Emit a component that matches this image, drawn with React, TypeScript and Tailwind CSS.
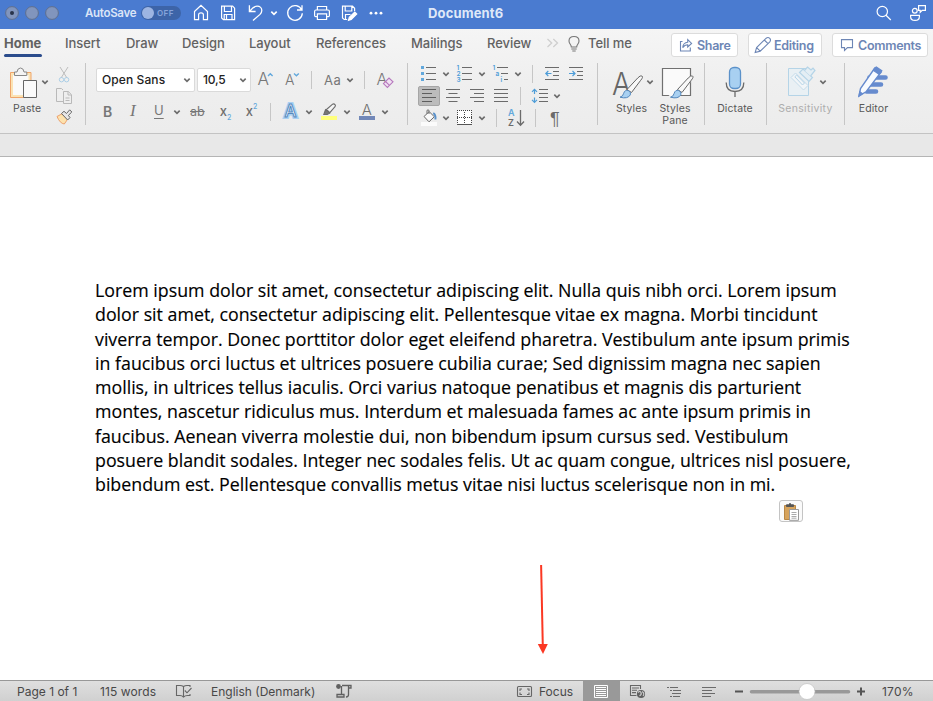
import type { ReactNode } from "react";

type PicProps = { box: string; className?: string; color?: string; width?: number; children: ReactNode };

/** Line drawing whose size is given by the last two numbers of its view box. */
function Pic({ box, className = "", color = "#6b6b6b", width = 1.2, children }: PicProps) {
  const [, , w, h] = box.split(" ");
  return (
    <svg
      viewBox={box}
      width={w}
      height={h}
      fill="none"
      stroke={color}
      strokeWidth={width}
      className={`block shrink-0 overflow-visible ${className}`}
    >
      {children}
    </svg>
  );
}

function Chevron({ className = "", color = "#6c6c6c" }: { className?: string; color?: string }) {
  return (
    <Pic box="0 0 8 8" className={className} color={color} width={1.6}>
      <path d="M1.3 2.6 4 5.4 6.7 2.6" />
    </Pic>
  );
}

function Divider({ className }: { className: string }) {
  return <div className={`w-px shrink-0 bg-[#c6c6c6] ${className}`} />;
}

const glyph = "font-['Inter',sans-serif]";

function TitleBar() {
  return (
    <header className="flex h-[29px] items-center bg-[#4a7bd0] pb-[3px] text-white">
      <Pic box="5 0 54 26" className="ml-[5px]" color="#5f6f8e" width={1}>
        <circle cx="12" cy="13" r="6.4" fill="#8195bd" />
        <circle cx="32" cy="13" r="6.4" fill="#8195bd" />
        <circle cx="52" cy="13" r="6.4" fill="#8195bd" />
        <circle cx="12" cy="13" r="2" fill="#28334a" stroke="none" />
      </Pic>
      <span className="mt-[2px] ml-[26px] w-[56px] text-[11.5px] font-semibold tracking-[-0.3px] text-[#dbe5f7]">AutoSave</span>
      <div className="flex h-[14px] w-[40px] items-center rounded-full bg-[#3d64a8]">
        <div className="ml-[1px] size-[12px] rounded-full bg-[#9db5e2]" />
        <span className="ml-[3px] text-[8px] font-semibold tracking-[0.4px] text-[#86a4dc]">OFF</span>
      </div>
      <Pic box="193 0 17 26" className="ml-[12px]" color="#fff" width={1.2}>
        <path d="M194.5 11.5 201 5.4 207.5 11.5V19.6H203.4V14.8Q203.4 12.8 201 12.8T198.6 14.8V19.6H194.5Z" />
      </Pic>
      <Pic box="220 0 17 26" className="ml-[10px]" color="#fff" width={1.2}>
        <path d="M221.6 6.2H232.6L234.6 8.2V19.7H223.4L221.6 18ZM224.4 6.5V11.5H231.5V6.5M224.2 19.5V14.5H232V19.5M226.5 15V19" />
      </Pic>
      <Pic box="247 0 17 26" className="ml-[10px]" color="#fff" width={1.3}>
        <path d="M249.4 5.3V11.5H255.6M249.8 11.2C252 8.2 254 6.2 257.2 6.2 260 6.2 261.8 8.2 261.8 10.5 261.8 12.2 261 13.3 260 14.4L253 20.6" />
      </Pic>
      <Chevron className="ml-[6px]" color="#fff" />
      <Pic box="286 0 18 26" className="ml-[8px]" color="#fff" width={1.3}>
        <path d="M302 5.2V10H297M301.6 9.8A7.3 7.3 0 1 0 302.3 13.2" />
      </Pic>
      <Pic box="313 0 18 26" className="ml-[9px]" color="#fff" width={1.2}>
        <path d="M317.4 10V6.5H326.6V10M317 16.7H315.7Q314.6 16.7 314.6 15.5V11.6Q314.6 10 316 10H328Q329.4 10 329.4 11.6V15.5Q329.4 16.7 328.3 16.7H327M317.4 13.8H326.6V19.5H317.4Z" />
      </Pic>
      <Pic box="340 0 18 26" className="ml-[9px]" color="#fff" width={1.2}>
        <path d="M347.2 19.5H344.2L342.5 18V6.2H352.5L354.6 8.2V11M345.2 6.5V11H351.8V6.5M345.5 19V14.5H350.5" />
        <path d="M348.5 20.3 349.3 17.4 354.8 12.2 356.7 14 351.2 19.4Z" fill="#fff" />
      </Pic>
      <Pic box="368 0 16 26" className="ml-[10px]" color="none">
        <g fill="#fff">
          <circle cx="371" cy="13.2" r="1.4" />
          <circle cx="376" cy="13.2" r="1.4" />
          <circle cx="381" cy="13.2" r="1.4" />
        </g>
      </Pic>
      <span className="mt-[2px] ml-[44px] text-[13px] font-bold tracking-[0.15px] text-[#dfe8f8]">Document6</span>
      <Pic box="875 0 17 26" className="ml-auto" color="#fff" width={1.2}>
        <circle cx="882.3" cy="11.5" r="5.2" />
        <path d="M886 15.3 890.8 20" />
      </Pic>
      <Pic box="909 0 18 26" className="mr-[6px] ml-[17px]" color="#fff" width={1.2}>
        <circle cx="914.8" cy="10.8" r="2.4" />
        <path d="M910.6 15.3H919.4V16.4Q919.4 20.4 915 20.4T910.6 16.4ZM918.6 5.6H925.4V10.4H922.2L920.2 12.3V10.4H918.6Z" />
      </Pic>
    </header>
  );
}

function Tabs() {
  return (
    <nav className="flex h-[33px] items-start pt-[6px] text-[13px] leading-[16px] font-medium tracking-[-0.05px] text-[#626262]">
      <div className="ml-[4px] w-[61px] font-bold tracking-[0px]">
        Home
        <div className="mt-[3px] h-[3px] w-[38px] rounded-full bg-[#2b4c8c]" />
      </div>
      <span className="w-[61px]">Insert</span>
      <span className="w-[56px]">Draw</span>
      <span className="w-[67px]">Design</span>
      <span className="w-[67px]">Layout</span>
      <span className="w-[95px]">References</span>
      <span className="w-[76px]">Mailings</span>
      <span className="w-[59px]">Review</span>
      <Pic box="546 35 14 16" color="#cfcfcf" width={1.3}>
        <path d="M547.5 39 551.7 43 547.5 47M553.3 39 557.5 43 553.3 47" />
      </Pic>
      <Pic box="567 35 14 18" className="ml-[7px]" width={1.1} color="#777">
        <path d="M571.3 47C571.3 44.5 569 44 569 41 569 38.2 571.2 36.5 574 36.5S579 38.2 579 41C579 44 576.7 44.5 576.7 47ZM571.3 49H576.7M572.3 51H575.7" />
      </Pic>
      <span className="ml-[7px] w-[83px]">Tell me</span>
      <div className="-mt-[2px] flex h-[24px] w-[67px] items-center rounded-[3px] border border-[#dcdcdc] bg-white text-[12.5px] font-semibold tracking-[-0.3px] text-[#6d86b5]">
        <Pic box="679 37 14 16" className="mr-[4px] ml-[7px]" color="#6d86b5" width={1.1}>
          <path d="M682.5 41.5H680.5V51H690.3V47.5M682.7 47.6C683 44 684.8 42.4 687.7 42.2V39.5L691.6 43.4 687.7 47V44.8C685.5 44.8 684 45.6 682.7 47.6Z" />
        </Pic>
        <span className="mt-px">Share</span>
      </div>
      <div className="-mt-[2px] ml-[10px] flex h-[24px] w-[74px] items-center rounded-[3px] border border-[#dcdcdc] bg-white text-[12.5px] font-semibold tracking-[-0.3px] text-[#6d86b5]">
        <Pic box="754 36 18 18" className="mr-[2px] ml-[5px]" color="#6d86b5" width={1.1}>
          <path d="M755.2 52.4 756.6 47.6 766.2 38.2Q768 36.8 769.8 38.3 771.2 40 769.8 41.9L760.2 51.2ZM756.6 47.6 760.2 51.2M764.3 40 768 43.6" />
        </Pic>
        <span className="mt-px">Editing</span>
      </div>
      <div className="-mt-[2px] ml-[10px] flex h-[24px] w-[96px] items-center rounded-[3px] border border-[#dcdcdc] bg-white text-[12.5px] font-semibold tracking-[-0.3px] text-[#6d86b5]">
        <Pic box="840 37 15 16" className="mr-[2px] ml-[7px]" color="#6d86b5" width={1.1}>
          <path d="M841.5 39.6H852.5V47.6H847.5L844.5 50.5V47.6H841.5Z" />
        </Pic>
        <span className="mt-px ml-px">Comments</span>
      </div>
    </nav>
  );
}

function ClipboardGroup() {
  return (
    <section className="flex w-[85px] text-[#555]">
      <div className="ml-[8px] w-[42px]">
        <div className="flex h-[39px] items-start">
          <Pic box="8 62 31 39" width={1}>
            <path d="M10.5 72.5H31V97.5H10.5Z" stroke="#efa56a" fill="#fbe3b4" />
            <path d="M13 75H28.5V95H13Z" stroke="none" fill="#fafafa" />
            <path d="M14.5 75.5V72H17Q17.5 68 20.5 68T24 72H26.8V75.5Z" fill="#f4f4f4" stroke="#888" />
            <path d="M23.5 80.5H36.5V97.5H23.5Z" fill="#fafafa" stroke="#666" />
          </Pic>
          <Chevron className="mt-[16px] ml-[2px]" />
        </div>
        <div className="ml-[5px] pt-px text-[10.5px] leading-[13px] tracking-[0.15px]">Paste</div>
      </div>
      <Pic box="55 62 19 65" className="ml-[5px]">
        <g strokeWidth="1">
          <path d="M60 67 67 78M68 67 61 78" stroke="#bdbdbd" />
          <circle cx="61.5" cy="79.7" r="2.2" stroke="#accfe7" />
          <circle cx="66.6" cy="79.7" r="2.2" stroke="#accfe7" />
          <path d="M63 101.5H56.5V88.5H61.5L63 90M63.5 91.5H68.3L71.5 94.7V103.5H63.5ZM68 91.5V95H71.5M65.5 98H69.5M65.5 100.5H69.5" stroke="#b9b9b9" />
          <path d="M57 116.5 62 113.8 67.5 119.4 64.3 124Q60 123.5 57 116.5Z" fill="#fde2ad" stroke="#eca16d" />
          <path d="M61.5 113.5 64 111.3 66.5 113.5 69.7 109.8 71.8 112 68.4 115.4 70 117.6 67.6 120Z" fill="#e6e6e6" stroke="#666" />
        </g>
      </Pic>
    </section>
  );
}

function FontGroup() {
  return (
    <section className="w-[321px]">
      <div className="mt-[6px] flex h-[24px] items-center">
        <div className="ml-[10px] flex h-[24px] w-[99px] items-center rounded-[2px] border border-[#dadada] bg-white text-[12px] tracking-[0.1px] text-[#222]">
          <span className="ml-[5px] w-[81px] font-medium">Open Sans</span>
          <Chevron />
        </div>
        <div className="ml-[2px] flex h-[24px] w-[54px] items-center rounded-[2px] border border-[#dadada] bg-white text-[12px] text-[#222]">
          <span className="ml-[5px] w-[36px] font-medium tracking-[-0.2px]">10,5</span>
          <Chevron />
        </div>
        <Pic box="257 68 44 24" className="ml-[6px]">
          <g className={glyph} fill="#777" stroke="none">
            <text x="257.5" y="85" fontSize="17" fontWeight="300">A</text>
            <text x="285" y="85" fontSize="14" fontWeight="300">A</text>
          </g>
          <path d="M268 76 270.3 73.8 272.6 76M294 73.5 296.4 75.8 298.8 73.5" stroke="#62a8dc" strokeWidth="1.4" />
        </Pic>
        <Divider className="ml-[10px] h-[18px]" />
        <span className="mt-px ml-[12px] w-[22px] text-[13px] tracking-[0.5px] text-[#777]">Aa</span>
        <Chevron />
        <Divider className="ml-[10px] h-[18px]" />
        <Pic box="376 68 19 24" className="ml-[11px]" width={1.1}>
          <text x="376.5" y="85" fontSize="16" fontWeight="300" fill="#777" stroke="none" className={glyph}>A</text>
          <path d="M383.4 83.6 389 78 393 81.8 387.4 87.4ZM385.5 81.5 389.5 85.3" fill="#f0e2f2" stroke="#b678bd" />
        </Pic>
      </div>
      <div className="mt-[8px] flex h-[24px] items-center text-[#777]">
        <span className="-mt-[2px] ml-[17px] w-[26px] text-[14px] font-semibold">B</span>
        <span className="-mt-[2px] ml-px w-[24px] font-['Liberation_Serif',serif] text-[17px] italic">I</span>
        <span className="-mt-[2px] w-[19px] text-[13px] underline underline-offset-[3px]">U</span>
        <Chevron />
        <span className="ml-[9px] w-[29px] text-[12.5px] line-through">ab</span>
        <Pic box="219 100 40 24" color="none">
          <g className={glyph} fill="#6d6d6d" fontSize="13" fontWeight="500">
            <text x="219.7" y="116">x</text>
            <text x="245.7" y="116">x</text>
            <g fill="#62a8dc" fontSize="7">
              <text x="227" y="120">2</text>
              <text x="253" y="109">2</text>
            </g>
          </g>
        </Pic>
        <Divider className="ml-[11px] h-[18px]" />
        <Pic box="282 100 19 24" className="ml-[11px]" color="none">
          <text x="284.5" y="117" fontSize="17" fontWeight="500" stroke="#a9d0f2" strokeWidth="4" className={glyph}>A</text>
          <text x="284.5" y="117" fontSize="17" fontWeight="500" fill="#f7fbff" stroke="#5688bd" strokeWidth="1" className={glyph}>A</text>
        </Pic>
        <Chevron className="ml-[4px]" />
        <Pic box="320 100 18 24" className="ml-[7px]" width={1.1}>
          <path d="M321 116H337V120H321Z" fill="#ffff7d" stroke="none" />
          <path d="M326.5 109.5 332.6 104.2Q334 103.4 335 104.7T334.8 107L329.8 112.6Z" fill="#f5f5f5" />
          <path d="M325.5 109.7 329.6 113.2 327.2 114.5 323.8 114.5Z" fill="#777" />
        </Pic>
        <Chevron className="ml-[5px]" />
        <Pic box="358 100 18 24" className="ml-[7px]" color="none">
          <text x="361.7" y="114.5" fontSize="15" fontWeight="300" fill="#707070" className={glyph}>A</text>
          <path d="M359 116H375V120H359Z" fill="#7288b8" />
        </Pic>
        <Chevron className="ml-[5px]" />
      </div>
    </section>
  );
}

function ParagraphGroup() {
  return (
    <section className="w-[189px]">
      <div className="mt-[2px] flex h-[20px] items-center">
        <Pic box="420 64 17 20" className="ml-[12px]">
          <path d="M421 66H424V69H421ZM421 72H424V75H421ZM421 78H424V81H421Z" fill="#62a8dc" stroke="none" />
          <path d="M426 67.5H436M426 73.5H436M426 79.5H436" />
        </Pic>
        <Chevron className="ml-[5px]" />
        <Pic box="456 64 17 20" className="ml-[6px]">
          <g className={glyph} fill="#4e9dd8" stroke="none" fontSize="6.5" fontWeight="600">
            <text x="456.6" y="70">1</text><text x="456.6" y="76.2">2</text><text x="456.6" y="82.4">3</text>
          </g>
          <path d="M462 67.5H472M462 73.5H472M462 79.5H472" />
        </Pic>
        <Chevron className="ml-[5px]" />
        <Pic box="492 64 17 20" className="ml-[6px]">
          <g className={glyph} fill="#4e9dd8" stroke="none" fontSize="6.5" fontWeight="600">
            <text x="492.5" y="70">1</text><text x="495.5" y="76.2">a</text><text x="500.5" y="82.4">i</text>
          </g>
          <path d="M497 67.5H508M501 73.5H508M504 79.5H508" />
        </Pic>
        <Chevron className="ml-[5px]" />
        <Divider className="ml-[10px] h-[18px]" />
        <Pic box="544 64 40 20" className="ml-[11px]">
          <path d="M545 67.5H559M553 71.5H559M553 75.5H559M545 79.5H559M569 67.5H583M577 71.5H583M577 75.5H583M569 79.5H583" />
          <path d="M551.5 73.5H545.8M548.3 71 545.8 73.5 548.3 76M569 73.5H575M572.5 71 575 73.5 572.5 76" stroke="#4e9dd8" />
        </Pic>
      </div>
      <div className="mt-[2px] flex h-[20px] items-center">
        <div className="ml-[10px] h-[20px] w-[22px] rounded-[2px] border border-[#a6a6a6] bg-[#bcbcbc]">
          <Pic box="419 87 20 18" color="#5e5e5e">
            <path d="M422 89.5H436M422 93.5H432M422 97.5H436M422 101.5H432" />
          </Pic>
        </div>
        <Pic box="446 86 64 20" className="ml-[6px]">
          <path d="M446 89.5H460M448.5 93.5H457.5M446 97.5H460M448.5 101.5H457.5M470 89.5H484M474 93.5H484M470 97.5H484M474 101.5H484M494 89.5H508M494 93.5H508M494 97.5H508M494 101.5H508" />
        </Pic>
        <Divider className="ml-[10px] h-[18px]" />
        <Pic box="531 86 18 20" className="ml-[10px]">
          <path d="M539 89.5H548M539 93.5H548M539 97.5H548M539 101.5H548" />
          <path d="M534.5 94V89.5M532 91.8 534.5 89.3 537 91.8M534.5 97.5V102M532 99.8 534.5 102.3 537 99.8" stroke="#4e9dd8" />
        </Pic>
        <Chevron className="ml-[4px]" />
      </div>
      <div className="mt-[2px] flex h-[20px] items-center">
        <Pic box="420 108 18 20" className="ml-[12px]" width={1}>
          <path d="M421 122H437V126H421Z" fill="#fbfbfb" stroke="none" />
          <path d="M424 116.5 429.2 111.6 434.3 116.8 429 121.8ZM427 113.8V111Q427 109.8 428 109.8T429 111V114" fill="#fafafa" />
          <path d="M433.2 113.2Q436 114.5 435.4 119.5" stroke="#5b92cb" strokeWidth="2" />
        </Pic>
        <Chevron className="ml-[4px]" />
        <Pic box="456 108 18 20" className="ml-[6px]" width={1}>
          <path d="M457.5 110.5H471.5V124.5H457.5Z" fill="#fff" stroke="none" />
          <path d="M457 110.5H472M457.5 112V124M471.5 112V124M464.5 112V124M457 117.5H472" strokeDasharray="1 1" stroke="#444" />
          <path d="M457 124.5H472" stroke="#555" />
        </Pic>
        <Chevron className="ml-[4px]" />
        <Divider className="ml-[10px] h-[18px]" />
        <Pic box="506 108 20 20" className="ml-[9px]" width={1.3}>
          <g className={glyph} stroke="none" fontSize="9" fontWeight="600">
            <text x="508" y="116" fill="#62a8dc">A</text>
            <text x="508" y="126" fill="#6b6b6b">Z</text>
          </g>
          <path d="M520.5 110V125M517 121.5 520.5 125.2 524 121.5" />
        </Pic>
        <Divider className="ml-[9px] h-[18px]" />
        <span className="mt-px ml-[14px] font-['Liberation_Sans',sans-serif] text-[18px] leading-[20px] text-[#6b6b6b]">¶</span>
      </div>
    </section>
  );
}

function Brush() {
  return (
    <>
      <path d="M14.5 27 25.2 15.5Q28 12.5 29.5 13.5T28.2 17.8L19 30Z" fill="#f8f8f8" stroke="#666" strokeWidth="1" />
      <path d="M7.5 34.7Q10.5 34 11.2 30.8 12.2 27.2 15.7 28 19 29.5 17.8 32.4 15.2 36.8 7.5 34.7Z" fill="#a8d0f1" stroke="#5588bd" strokeWidth="1" />
    </>
  );
}

function StylesGroups() {
  return (
    <div className="flex text-center text-[10.5px] leading-[12px] tracking-[0.1px] text-[#585858]">
      <section className="flex w-[106px]">
        <div className="ml-[12px] w-[44px]">
          <div className="flex h-[39px] items-start">
            <Pic box="0 0 33 39">
              <text x="2" y="32.5" fontSize="31" fontWeight="300" textLength="19" lengthAdjust="spacingAndGlyphs" fill="#666" stroke="none" className={glyph}>A</text>
              <g transform="translate(2.5 .5)"><Brush /></g>
            </Pic>
            <Chevron className="mt-[16px] ml-[3px]" />
          </div>
          <div className="ml-[3px] w-[37px] pt-[2px]">Styles</div>
        </div>
        <div className="ml-[5px] w-[38px]">
          <Pic box="0 0 35 39" className="ml-[2px]">
            <path d="M1.5 6.5H29.5V33.5H1.5Z" fill="#fafafa" stroke="#707070" />
            <path d="M7.5 34H18L29.5 20V15L18 25Z" fill="#fafafa" stroke="none" />
            <g transform="translate(2 .5)"><Brush /></g>
          </Pic>
          <div className="w-[32px] pt-[2px]">Styles<br />Pane</div>
        </div>
      </section>
      <Divider className="mt-[1px] h-[62px]" />
      <section className="flex w-[60px] flex-col items-center">
        <Pic box="0 0 22 39" width={1.3}>
          <rect x="5.5" y="5.5" width="11" height="21" rx="4.5" fill="#a8d0f1" stroke="#5b91c9" />
          <path d="M2.2 20.5Q2.2 29.5 11 29.5T19.8 20.5M11 29.5V35" />
        </Pic>
        <div className="pt-[2px]">Dictate</div>
      </section>
      <Divider className="mt-[1px] ml-[1px] h-[62px]" />
      <section className="w-[77px] text-[#adadad]">
        <div className="flex h-[39px] items-start">
          <Pic box="787 62 30 39" className="ml-[20px]" color="#b5d4e7" width={1}>
            <path d="M788.5 68.5H808.5V95.5H788.5Z" fill="#e9f0f4" />
            <path d="M791 77.5 795.5 73 808 85.5 803.5 90Z" fill="#f1f5f8" stroke="#c5dcea" />
            <path d="M794.8 76.8 796.7 75 804.5 83 802.5 85Z" />
            <path d="M799.5 72.5 803 69 812.5 77.5 809 81.5Z" fill="#e4eef4" strokeWidth="1.2" />
            <path d="M804.5 70.5 807.5 67 811 70 813 68.2 815 70.5 810.5 76" fill="#e4eef4" strokeWidth="1.2" />
          </Pic>
          <Chevron className="mt-[16px] ml-[2px]" />
        </div>
        <div className="pt-[2px] tracking-[0.3px]">Sensitivity</div>
      </section>
      <Divider className="mt-[1px] h-[62px]" />
      <section className="w-[57px]">
        <Pic box="857 62 32 39" className="ml-[12px]" color="#668bce">
          <path d="M869.5 77.5H885.5M869.5 84.5H881M866.5 91.5H876" strokeWidth="4.6" strokeLinecap="round" />
          <path d="M859 96 860.5 88.5 874.6 68.3 880.8 72.5 866.3 91.5Z" fill="#f8fbff" strokeWidth="1.4" />
          <path d="M874.6 68.3 876.3 67 881.8 70.8 880.8 72.5 879 74.2 873.3 70.3ZM859 96 859.8 91.7 862.5 93.7Z" fill="#668bce" />
        </Pic>
        <div className="pt-[2px]">Editor</div>
      </section>
    </div>
  );
}

const lines = [
  "Lorem ipsum dolor sit amet, consectetur adipiscing elit. Nulla quis nibh orci. Lorem ipsum",
  "dolor sit amet, consectetur adipiscing elit. Pellentesque vitae ex magna. Morbi tincidunt",
  "viverra tempor. Donec porttitor dolor eget eleifend pharetra. Vestibulum ante ipsum primis",
  "in faucibus orci luctus et ultrices posuere cubilia curae; Sed dignissim magna nec sapien",
  "mollis, in ultrices tellus iaculis. Orci varius natoque penatibus et magnis dis parturient",
  "montes, nascetur ridiculus mus. Interdum et malesuada fames ac ante ipsum primis in",
  "faucibus. Aenean viverra molestie dui, non bibendum ipsum cursus sed. Vestibulum",
  "posuere blandit sodales. Integer nec sodales felis. Ut ac quam congue, ultrices nisl posuere,",
  "bibendum est. Pellentesque convallis metus vitae nisi luctus scelerisque non in mi.",
];

function Page() {
  return (
    <main className="relative h-[524px] border-t border-[#b5b5b5] bg-white pt-[121px] pl-[95px] font-['Open_Sans',sans-serif] text-[17.8px] leading-[24.3px] text-black [-webkit-text-stroke:0.15px_black]">
      {lines.map((line) => (
        <p key={line} className="whitespace-nowrap">{line}</p>
      ))}
      <div className="absolute top-[343px] left-[779px] flex h-[22px] w-[24px] items-center justify-center rounded-[3px] border border-[#c4c4c4] bg-[#fafafa]">
        <Pic box="0 0 17 19" width={1}>
          <path d="M1.5 3.5H12.5V17.5H1.5Z" fill="#d6a35c" stroke="#b88745" />
          <path d="M3.5 4.5V2.8H5.5Q7 0 8.5 2.8H10.5V4.5Z" fill="#555" stroke="#555" />
          <path d="M6.5 7.5H15.5V18.3H6.5Z" fill="#fff" stroke="#999" />
          <path d="M8.5 10.5H13.5M8.5 12.5H13.5M8.5 14.5H13.5M8.5 16.2H13.5" stroke="#aaa" />
        </Pic>
      </div>
      <Pic box="535 563 16 94" className="absolute top-[406px] left-[535px]" color="#fb3823" width={2}>
        <path d="M541.1 565 542.8 646" />
        <path d="M537.8 644H547.8L543 654Z" fill="#fb3823" stroke="none" />
      </Pic>
    </main>
  );
}

function StatusBar() {
  return (
    <footer className="flex h-[21px] items-center border-t border-[#989898] bg-linear-to-b from-[#dfdfdf] to-[#d0d0d0] text-[12px] tracking-[0px] text-[#484848]">
      <span className="mt-px ml-[17px] w-[83px]">Page 1 of 1</span>
      <span className="mt-px w-[75px] tracking-[0.1px]">115 words</span>
      <Pic box="175 682 18 18" color="#666" width={1.1}>
        <path d="M183.5 696.5V686.5Q182 685.5 180 685.5H176.5V695.5H180Q182 695.5 183.5 697 185 695.5 187.5 695.5H190V694M183.5 686.5Q185 685.5 187 685.5H190V687M184.8 690.5 187 692.8 191.5 688" />
      </Pic>
      <span className="mt-px ml-[18px] w-[124px]">English (Denmark)</span>
      <Pic box="335 682 18 18" color="#606060" width={1.3}>
        <circle cx="338.5" cy="686.5" r="2.4" fill="#606060" stroke="none" />
        <path d="M342 685.5H351V688H348.5M348.5 686V694.5Q348.5 697 346 697M341.5 686V694M337 694.5H344V697H337Z" />
      </Pic>
      <Pic box="516 682 18 18" className="ml-[163px]" color="#666" width={1.1}>
        <rect x="517.5" y="686.5" width="14" height="10" rx="1" />
        <path d="M520 691V689H522M527 689H529V691M520 692.5V694.5H522M527 694.5H529V692.5" />
      </Pic>
      <span className="mt-px ml-[5px] w-[44px]">Focus</span>
      <div className="h-full w-[37px] bg-[#999]">
        <Pic box="583 681 37 20" color="#fff" width={1}>
          <path d="M594.5 685.5H607.5V697.5H594.5ZM596 687.5H606M596 689.5H606M596 691.5H606M596 693.5H606M596 695.5H606" />
        </Pic>
      </div>
      <Pic box="629 682 18 18" className="ml-[9px]" color="#666" width={1.1}>
        <path d="M636.5 695.5H630.5V685.5H640.5V689M632 688H639M632 690.3H637M632 692.6H636" />
        <circle cx="641" cy="694" r="4.1" fill="#606060" stroke="none" />
        <path d="M638 692.5Q640 690.5 641 692.5T639.5 695.8M642.2 691.5Q645 693.5 643 696" stroke="#d1d1d1" />
      </Pic>
      <Pic box="666 682 16 18" className="ml-[19px]" width={1.1}>
        <path d="M667 687.5H669M670 687.5H678M670 690.5H672M673 690.5H681M672 693.5H681M670 696.5H672M673 696.5H680" />
      </Pic>
      <Pic box="702 682 16 18" className="ml-[20px]" width={1.1}>
        <path d="M702 687.5H716M702 690.5H712M702 693.5H715M702 696.5H711" />
      </Pic>
      <Pic box="734 681 134 20" className="ml-[16px]" color="#555" width={2}>
        <path d="M735 691.5H743M857 691.5H865M861 687.5V695.5" />
        <path d="M751.5 691.7H848.5" stroke="#999" strokeWidth="3.5" strokeLinecap="round" />
        <circle cx="807" cy="691.5" r="8" fill="#fff" stroke="#bbb" strokeWidth=".6" />
      </Pic>
      <span className="mt-px ml-[14px] tracking-[0.2px]">170%</span>
    </footer>
  );
}

export default function App() {
  return (
    <div className="flex h-[701px] w-[933px] flex-col overflow-hidden whitespace-nowrap bg-[#e8e8e8] font-['Inter',sans-serif]">
      <TitleBar />
      <div className="h-[105px] border-b border-[#c3c3c3] bg-linear-to-b from-[#f5f5f5] via-[#efefef] to-[#ececec]">
        <Tabs />
        <div className="flex">
          <ClipboardGroup />
          <Divider className="mt-px h-[62px]" />
          <FontGroup />
          <Divider className="mt-px h-[62px]" />
          <ParagraphGroup />
          <Divider className="mt-px h-[62px]" />
          <StylesGroups />
        </div>
      </div>
      <div className="h-[22px] bg-[#e8e8e8]" />
      <Page />
      <StatusBar />
    </div>
  );
}
